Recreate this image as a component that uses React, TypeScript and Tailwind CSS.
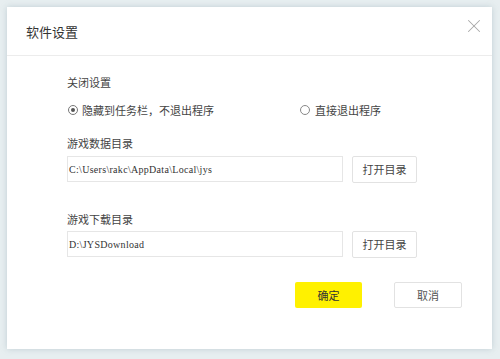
import { X } from "lucide-react";

const cjk = "font-['Noto_Sans_CJK_SC','Noto_Sans',sans-serif]";

function DirRow({ label, path, first }: { label: string; path: string; first?: boolean }) {
    return (
        <div className={first ? "mt-[17px]" : "mt-[28px]"}>
            <div className="text-[11px] leading-[16px] text-[#444]">{label}</div>
            <div className={"flex items-start " + (first ? "mt-[5px]" : "mt-[4px]")}>
                <div className="w-[276px] h-[26px] border border-[#e6e6e6] flex items-center pl-[1px] text-[10px] tracking-[0.3px] text-[#333] font-['Liberation_Serif',serif]">
                    {path}
                </div>
                <button className="ml-[9px] w-[65px] h-[27px] border border-[#e2e2e2] rounded-[2px] text-[11px] text-[#444] bg-white">
                    打开目录
                </button>
            </div>
        </div>
    );
}

export default function App() {
    return (
        <div className={"w-[500px] h-[359px] bg-[#e7eef0] pt-[7px] pl-[7px] " + cjk}>
            <div className="w-[485px] h-[342px] bg-white shadow-[0_0_6px_rgba(120,150,160,0.35)]">
                <div className="h-[49px] border-b border-[#ececec] flex justify-between pl-[19px] pr-[7px]">
                    <div className="self-center text-[13px] text-[#333] mt-[1px]">软件设置</div>
                    <X className="mt-[8px] w-[22px] h-[22px] text-[#a8a8a8]" strokeWidth={1.1} />
                </div>
                <div className="pl-[60px]">
                    <div className="mt-[18px] text-[11px] leading-[16px] text-[#444]">关闭设置</div>
                    <div className="mt-[12px] flex items-center text-[11px] leading-[16px] text-[#444]">
                        <div className="w-[233px] flex items-center">
                            <span className="ml-[1px] w-[10px] h-[10px] rounded-full border border-[#777] flex items-center justify-center">
                                <span className="w-[4px] h-[4px] rounded-full bg-[#555]" />
                            </span>
                            <span className="ml-[4px]">隐藏到任务栏，不退出程序</span>
                        </div>
                        <div className="flex items-center">
                            <span className="w-[10px] h-[10px] rounded-full border border-[#888]" />
                            <span className="ml-[5px]">直接退出程序</span>
                        </div>
                    </div>
                    <DirRow label="游戏数据目录" path="C:\Users\rakc\AppData\Local\jys" first />
                    <DirRow label="游戏下载目录" path="D:\JYSDownload" />
                    <div className="mt-[24px] flex">
                        <button className="ml-[228px] w-[67px] h-[26px] rounded-[2px] bg-[#fff100] text-[11px] text-[#333]">
                            确定
                        </button>
                        <button className="ml-[32px] w-[68px] h-[26px] rounded-[2px] border border-[#e2e2e2] bg-white text-[11px] text-[#555]">
                            取消
                        </button>
                    </div>
                </div>
            </div>
        </div>
    );
}
